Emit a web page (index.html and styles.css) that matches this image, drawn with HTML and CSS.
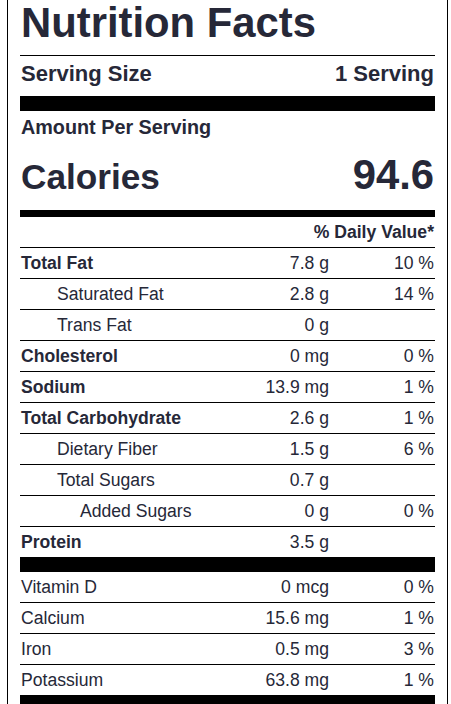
FILE: index.html
```
<!DOCTYPE html>
<html lang="en">
<head>
    <meta charset="UTF-8">
    <meta name="viewport" content="width=device-width, initial-scale=1.0">
    <title>Nutrition Facts</title>
    <link rel="stylesheet" href="styles.css">
</head>
<body>
    <div class="label">
        <div class="title">Nutrition Facts</div>
        <div class="serving"><span>Serving Size</span><span>1 Serving</span></div>
        <div class="amount">Amount Per Serving</div>
        <div class="calories"><span>Calories</span><span class="cal-value">94.6</span></div>

        <div class="row dv-head"><span></span><span></span><span>% Daily Value*</span></div>
        <div class="row bold"><span>Total Fat</span><span>7.8 g</span><span>10 %</span></div>
        <div class="row sub"><span>Saturated Fat</span><span>2.8 g</span><span>14 %</span></div>
        <div class="row sub"><span>Trans Fat</span><span>0 g</span><span></span></div>
        <div class="row bold"><span>Cholesterol</span><span>0 mg</span><span>0 %</span></div>
        <div class="row bold"><span>Sodium</span><span>13.9 mg</span><span>1 %</span></div>
        <div class="row bold"><span>Total Carbohydrate</span><span>2.6 g</span><span>1 %</span></div>
        <div class="row sub"><span>Dietary Fiber</span><span>1.5 g</span><span>6 %</span></div>
        <div class="row sub"><span>Total Sugars</span><span>0.7 g</span><span></span></div>
        <div class="row sub2"><span>Added Sugars</span><span>0 g</span><span>0 %</span></div>
        <div class="row bold thick"><span>Protein</span><span>3.5 g</span><span></span></div>

        <div class="row"><span>Vitamin D</span><span>0 mcg</span><span>0 %</span></div>
        <div class="row"><span>Calcium</span><span>15.6 mg</span><span>1 %</span></div>
        <div class="row"><span>Iron</span><span>0.5 mg</span><span>3 %</span></div>
        <div class="row thick"><span>Potassium</span><span>63.8 mg</span><span>1 %</span></div>
    </div>
</body>
</html>
```
FILE: styles.css
```
body{
    margin: 0;
    background: #fff;
    font-family: "Liberation Sans", Arial, sans-serif;
    color: #262838;
}
.label{
    margin-left: 7px;
    width: 415px;
    padding: 0 12px;
    border-left: 1px solid #000;
    border-right: 1px solid #000;
}
.title{
    font-size: 41.8px;
    font-weight: bold;
    line-height: 46px;
    padding-left: 1px;
    padding-bottom: 9px;
    border-bottom: 1px solid #000;
}
.serving{
    display: flex;
    justify-content: space-between;
    font-size: 22px;
    font-weight: bold;
    line-height: 26px;
    padding: 5px 1px 9px 1px;
    border-bottom: 15px solid #000;
}
.amount{
    font-size: 19.8px;
    font-weight: bold;
    line-height: 23px;
    padding-top: 5px;
    padding-left: 1px;
}
.calories{
    display: flex;
    justify-content: space-between;
    align-items: baseline;
    font-weight: bold;
    font-size: 35.2px;
    padding: 12px 1px 11px 1px;
    border-bottom: 7px solid #000;
}
.cal-value{
    font-size: 41.8px;
    line-height: 48px;
}
.row{
    display: grid;
    grid-template-columns: 1fr 120px 105px;
    font-size: 17.6px;
    line-height: 30px;
    padding: 0 1px;
    border-bottom: 1px solid #000;
}
.row span:nth-child(2), .row span:nth-child(3){
    text-align: right;
}
.dv-head span:nth-child(3){
    grid-column: 2 / 4;
    font-weight: bold;
}
.dv-head span:nth-child(2){
    display: none;
}
.bold span:first-child{
    font-weight: bold;
}
.sub span:first-child{
    padding-left: 36px;
}
.sub2 span:first-child{
    padding-left: 59px;
}
.thick{
    border-bottom: 15px solid #000;
}
```
